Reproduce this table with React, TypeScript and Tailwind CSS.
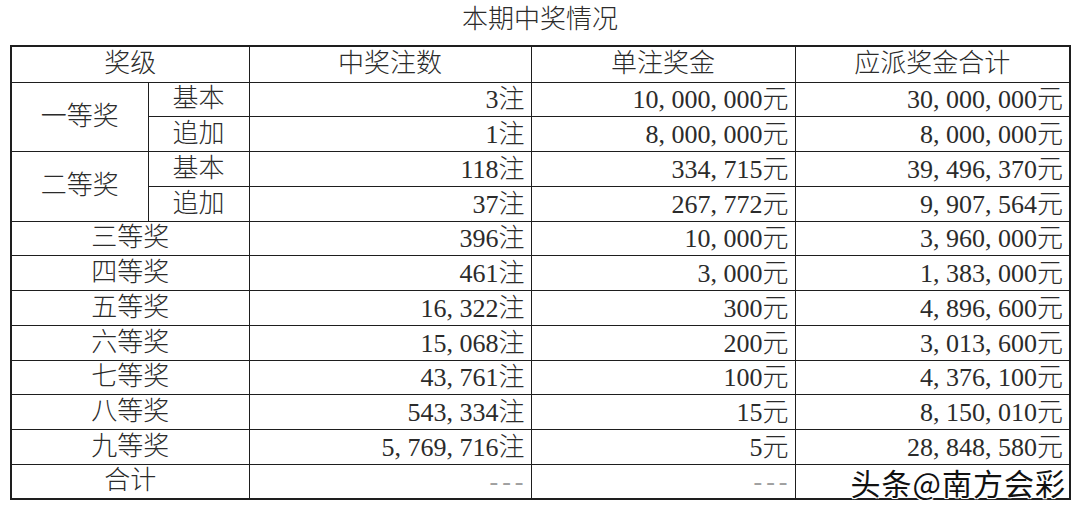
import React from 'react';

type Row = {
  level?: string;
  span?: number;
  sub?: string;
  count: string;
  unit: string;
  total: string;
};

const rows: Row[] = [
  { level: '一等奖', span: 2, sub: '基本', count: '3注', unit: '10,000,000元', total: '30,000,000元' },
  { sub: '追加', count: '1注', unit: '8,000,000元', total: '8,000,000元' },
  { level: '二等奖', span: 2, sub: '基本', count: '118注', unit: '334,715元', total: '39,496,370元' },
  { sub: '追加', count: '37注', unit: '267,772元', total: '9,907,564元' },
  { level: '三等奖', count: '396注', unit: '10,000元', total: '3,960,000元' },
  { level: '四等奖', count: '461注', unit: '3,000元', total: '1,383,000元' },
  { level: '五等奖', count: '16,322注', unit: '300元', total: '4,896,600元' },
  { level: '六等奖', count: '15,068注', unit: '200元', total: '3,013,600元' },
  { level: '七等奖', count: '43,761注', unit: '100元', total: '4,376,100元' },
  { level: '八等奖', count: '543,334注', unit: '15元', total: '8,150,010元' },
  { level: '九等奖', count: '5,769,716注', unit: '5元', total: '28,848,580元' },
];

// SimSun-style wide commas: pad each comma out to a full digit width
function Num({ value }: { value: string }) {
  const parts = value.split(',');
  return (
    <>
      {parts.map((p, i) => (
        <React.Fragment key={i}>
          {p}
          {i < parts.length - 1 && <span className="mr-[6.5px]">,</span>}
        </React.Fragment>
      ))}
    </>
  );
}

const cell = 'border-[1.5px] border-[#1e1e1e] p-0 leading-none';
const num = `${cell} text-right pr-[6px] pt-[2px]`;
const dash = `${cell} text-right pr-[3px] pt-[2px] text-[#a0a0a0] tracking-[4px]`;

export default function App() {
  return (
    <div
      className="w-[1080px] h-[508px] bg-white text-[#2b2b2b] font-light"
      style={{ fontFamily: '"Liberation Serif", "Noto Sans CJK SC", serif' }}
    >
      <div className="h-[45px] flex items-center justify-center text-[26px] leading-none pb-[6px]">
        本期中奖情况
      </div>
      <div className="relative ml-[10px] w-[1059px]">
        <table className="w-[1059px] table-fixed border-collapse border-2 border-[#1e1e1e] text-[26px]">
          <colgroup>
            <col className="w-[137px]" />
            <col className="w-[101px]" />
            <col className="w-[282px]" />
            <col className="w-[264px]" />
            <col className="w-[275px]" />
          </colgroup>
          <thead>
            <tr className="h-[36px]">
              <th colSpan={2} className={`${cell} font-light`}>奖级</th>
              <th className={`${cell} font-light`}>中奖注数</th>
              <th className={`${cell} font-light`}>单注奖金</th>
              <th className={`${cell} font-light`}>应派奖金合计</th>
            </tr>
          </thead>
          <tbody>
            {rows.map((r, i) => (
              <tr key={i} className="h-[34.75px]">
                {r.level && r.sub && (
                  <td rowSpan={r.span} className={`${cell} text-center`}>
                    {r.level}
                  </td>
                )}
                {r.level && !r.sub && (
                  <td colSpan={2} className={`${cell} text-center`}>
                    {r.level}
                  </td>
                )}
                {r.sub && <td className={`${cell} text-center`}>{r.sub}</td>}
                <td className={num}>
                  <Num value={r.count} />
                </td>
                <td className={num}>
                  <Num value={r.unit} />
                </td>
                <td className={num}>
                  <Num value={r.total} />
                </td>
              </tr>
            ))}
            <tr className="h-[34.75px]">
              <td colSpan={2} className={`${cell} text-center`}>合计</td>
              <td className={dash}>---</td>
              <td className={dash}>---</td>
              <td className={num}></td>
            </tr>
          </tbody>
        </table>
        <div
          className="absolute right-[3px] bottom-[3px] text-[30px] leading-none text-[#111] font-normal tracking-[1px] [text-shadow:0_0_2px_#fff,1px_1px_0_#fff,-1px_-1px_0_#fff,1px_-1px_0_#fff,-1px_1px_0_#fff]"
          style={{ fontFamily: '"Noto Sans CJK SC", sans-serif' }}
        >
          头条@南方会彩
        </div>
      </div>
    </div>
  );
}
